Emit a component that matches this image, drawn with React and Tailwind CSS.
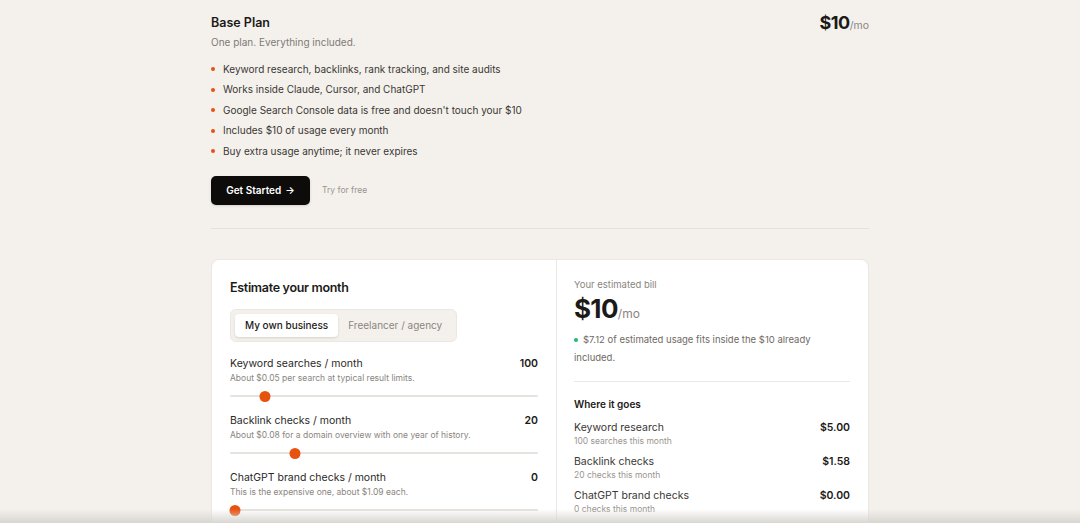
import React, { useState } from 'react';

const features = [
  'Keyword research, backlinks, rank tracking, and site audits',
  'Works inside Claude, Cursor, and ChatGPT',
  "Google Search Console data is free and doesn't touch your $10",
  'Includes $10 of usage every month',
  'Buy extra usage anytime; it never expires',
];

const sliders = [
  { label: 'Keyword searches / month', note: 'About $0.05 per search at typical result limits.', value: 100, pct: 11.5 },
  { label: 'Backlink checks / month', note: 'About $0.08 for a domain overview with one year of history.', value: 20, pct: 21 },
  { label: 'ChatGPT brand checks / month', note: 'This is the expensive one, about $1.09 each.', value: 0, pct: 1.5 },
];

const breakdown = [
  { name: 'Keyword research', sub: '100 searches this month', cost: '$5.00' },
  { name: 'Backlink checks', sub: '20 checks this month', cost: '$1.58' },
  { name: 'ChatGPT brand checks', sub: '0 checks this month', cost: '$0.00' },
];

function Slider({ label, note, value, pct }) {
  return (
    <div className="h-[57px]">
      <div className="flex justify-between items-baseline">
        <span className="text-[10.5px] text-[#2a2826] leading-[14px]">{label}</span>
        <span className="text-[10.5px] font-semibold text-[#1c1a18] leading-[14px]">{value}</span>
      </div>
      <p className="text-[8.5px] text-[#8a8580] mt-[1px] leading-[12px]">{note}</p>
      <div className="relative mt-[7px] h-[11px] flex items-center">
        <div className="h-[2px] w-full bg-[#e6e2dd] rounded-full" />
        <div className="absolute top-0 h-[11px] w-[11px] rounded-full bg-[#e8520f] -translate-x-1/2" style={{ left: `${pct}%` }} />
      </div>
    </div>
  );
}

export default function App() {
  const [mode, setMode] = useState('own');

  return (
    <div className="relative min-h-[523px] h-[523px] overflow-hidden bg-[#f4f1ed] font-['Inter','Liberation_Sans',sans-serif] text-[#1c1a18]">
      <div className="w-[658px] mx-auto pt-[14px]">
        <div className="flex justify-between">
          <div>
            <h1 className="text-[12.5px] font-semibold leading-[18px]">Base Plan</h1>
            <p className="text-[10px] text-[#7e7a75] mt-[3px] leading-[14px]">One plan. Everything included.</p>
          </div>
          <div className="flex items-baseline">
            <span className="text-[18px] font-bold leading-[18px] tracking-tight">$10</span>
            <span className="text-[10.5px] text-[#8a8580]">/mo</span>
          </div>
        </div>

        <ul className="mt-[10px] flex flex-col">
          {features.map((f) => (
            <li key={f} className="flex items-center h-[20.5px] text-[10px] text-[#3a3733]">
              <span className="w-[4px] h-[4px] rounded-full bg-[#e8520f] mr-[8px]" />
              {f}
            </li>
          ))}
        </ul>

        <div className="mt-[14px] flex items-center gap-[12px]">
          <button className="h-[29px] w-[99px] rounded-[5px] bg-[#0d0c0b] text-white text-[10px] font-semibold flex items-center justify-center gap-[4px] shadow-sm">
            Get Started <span className="text-[10px]">→</span>
          </button>
          <span className="text-[8.5px] text-[#9a958f]">Try for free</span>
        </div>

        <div className="mt-[23px] h-px bg-[#e4e0db]" />

        <div className="mt-[30px] bg-white rounded-[8px] border border-[#ebe7e2] flex">
          <div className="w-[345px] border-r border-[#ebe7e2] pl-[18px] pr-[18px] pt-[19px]">
            <h2 className="text-[12.5px] font-semibold tracking-tight leading-[18px]">Estimate your month</h2>
            <div className="mt-[12px] inline-flex p-[4px] rounded-[6px] bg-[#f4f1ed] border border-[#ebe7e2]">
              <button
                onClick={() => setMode('own')}
                className={`h-[23px] px-[10px] rounded-[4px] text-[10px] ${mode === 'own' ? 'bg-white text-[#1c1a18] font-medium shadow-sm' : 'text-[#8a8580]'}`}
              >
                My own business
              </button>
              <button
                onClick={() => setMode('agency')}
                className={`h-[23px] px-[10px] rounded-[4px] text-[10px] ${mode === 'agency' ? 'bg-white text-[#1c1a18] font-medium shadow-sm' : 'text-[#8a8580]'}`}
              >
                Freelancer / agency
              </button>
            </div>
            <div className="mt-[15px]">
              {sliders.map((s) => (
                <Slider key={s.label} {...s} />
              ))}
            </div>
          </div>

          <div className="flex-1 pl-[17px] pr-[18px] pt-[18px]">
            <p className="text-[9.5px] text-[#8a8580] leading-[14px]">Your estimated bill</p>
            <div className="flex items-baseline mt-[1px]">
              <span className="text-[26px] font-bold leading-[32px] tracking-tight">$10</span>
              <span className="text-[12px] text-[#8a8580]">/mo</span>
            </div>
            <p className="mt-[6px] text-[9.5px] text-[#6e6a65] leading-[18px]">
              <span className="inline-block w-[4px] h-[4px] bg-[#22b573] rounded-full mr-[5px] align-middle" />
              $7.12 of estimated usage fits inside the $10 already included.
            </p>
            <div className="mt-[14px] h-px bg-[#ebe7e2]" />
            <h3 className="mt-[15px] text-[10px] font-semibold leading-[14px]">Where it goes</h3>
            <div className="mt-[10px] flex flex-col">
              {breakdown.map((b) => (
                <div key={b.name} className="flex justify-between h-[34px]">
                  <div>
                    <p className="text-[10.5px] text-[#3a3733] leading-[14px]">{b.name}</p>
                    <p className="text-[8.5px] text-[#9a958f] leading-[12px]">{b.sub}</p>
                  </div>
                  <span className="text-[10.5px] font-semibold leading-[14px]">{b.cost}</span>
                </div>
              ))}
            </div>
          </div>
        </div>
      </div>
      <div className="absolute inset-x-0 bottom-0 h-[14px] bg-gradient-to-b from-transparent to-[#d9d6d2] pointer-events-none" />
    </div>
  );
}
